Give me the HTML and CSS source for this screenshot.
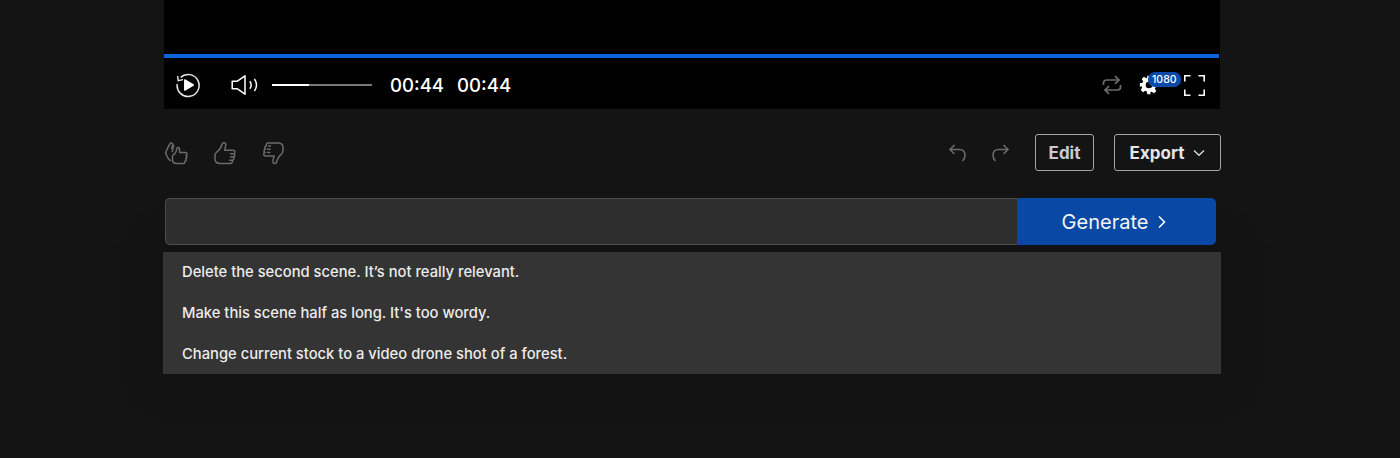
FILE: index.html
```html
<!doctype html>
<html>

<head>
    <meta charset="UTF-8">
    <title>Video editor</title>
    <link rel="stylesheet" href="styles.css">
</head>

<body>
    <div class="page">
        <div class="video">
            <div class="progress"></div>
            <div class="controls">
                <svg class="replay" width="26" height="26" viewBox="0 0 26 26" fill="none" stroke="#e8e8e8" stroke-width="1.5">
                    <path d="M5.600 5.400A11 11 0 1 1 2.200 12" />
                    <path d="M2.600 4 3.200 8.600 8 7.600" stroke-width="1.400" />
                    <path d="M9.800 8 18.200 13 9.800 18z" fill="#fff" stroke="#fff" stroke-linejoin="round" />
                </svg>
                <svg class="volume" width="28" height="22" viewBox="0 0 28 22" fill="none" stroke="#fff" stroke-width="1.5">
                    <path d="M1.200 7.200h5.200L14 1.800v18.400l-7.600-5.400H1.200z" stroke-linejoin="round" />
                    <path d="M18.800 7.200c1.600 2.200 1.600 5.400 0 7.600" />
                    <path d="M23.400 4.800c2.600 3.800 2.600 8.600 0 12.400" />
                </svg>
                <div class="volume-bar">
                    <div class="volume-level"></div>
                </div>
                <span class="time first">00:44</span>
                <span class="time">00:44</span>
                <div class="controls-right">
                    <svg class="loop" width="20" height="20" viewBox="0 0 20 20" fill="none" stroke="#6e6e6e" stroke-width="1.700">
                        <path d="M1.500 10V8a3 3 0 0 1 3-3h12" />
                        <path d="M13 1.200 17 5l-4 3.800" />
                        <path d="M18.500 10v2a3 3 0 0 1-3 3h-12" />
                        <path d="M7 11.200 3 15l4 3.800" />
                    </svg>
                    <div class="settings">
                        <svg width="20" height="20" viewBox="0 0 24 24" fill="#fff">
                            <path fill-rule="evenodd" d="M10 1h4l.6 3.200 1.900.8 2.700-1.800 2.800 2.800-1.800 2.700.8 1.900L23 10v4l-3.200.6-.8 1.900 1.800 2.700-2.800 2.800-2.700-1.800-1.900.8L14 23h-4l-.6-3.200-1.900-.8-2.700 1.800L2 18l1.800-2.700-.8-1.900L1 14v-4l3.200-.6.8-1.900L3.200 4.800 6 2l2.700 1.800 1-.5zM12 8a4 4 0 1 0 0 8 4 4 0 0 0 0-8z" />
                        </svg>
                        <span class="badge">1080</span>
                    </div>
                    <svg class="fullscreen" width="21" height="21" viewBox="0 0 21 21" fill="none" stroke="#fff" stroke-width="1.600">
                        <path d="M.8 6.500V.8h5.700M14.500.8h5.700v5.700M20.200 14.500v5.700h-5.700M6.500 20.200H.8v-5.700" />
                    </svg>
                </div>
            </div>
        </div>

        <div class="actions">
            <div class="ratings">
                <svg width="26" height="26" viewBox="0 0 26 26" fill="none" stroke="#6b6b6b" stroke-width="1.500" stroke-linejoin="round" stroke-linecap="round">
                    <path d="M6.500 20.500c-1.500-.5-2-1.500-2.800-3L2.200 14.500c-.8-1.500-.6-2.700.3-4.200l3.300-6.500c.8-1.500 3.200-.9 2.900 1L7.700 8.500" />
                    <path d="M11 13.500c1-1.500 1.600-3 1.800-5 .1-1.400 2.500-1.500 2.700.3l.1 3.700h5.900c2 0 2 2.800.3 3 1.500.5 1.300 2.700-.2 2.900 1 .7.700 2.500-.6 2.700.3 1-.3 2.400-1.600 2.400h-6.400c-2.700 0-4.500-1.300-4.500-3.500V16c0-1 1.600-1.500 2.500-2.500z" />
                    <path d="M9.800 5.500c-.7 1.500-1.200 3.500-1.500 6" />
                </svg>
                <svg width="26" height="26" viewBox="0 0 26 26" fill="none" stroke="#6b6b6b" stroke-width="1.500" stroke-linejoin="round" stroke-linecap="round">
                    <path d="M2 15c0-1.300.7-2.200 1.800-3 2.500-1.800 4.500-5 5.500-8.200.5-1.600 3.500-1.500 3.500.8 0 1.700-.6 3.700-1.200 5.700h8.300c2.700 0 2.700 3.200.7 3.500 1.700.6 1.400 3-.3 3.300 1.100.9.700 2.900-.8 3.100.4 1.300-.4 3.300-2.200 3.300H7.500C4 23.500 2 21.800 2 19z" />
                    <path d="M17.500 13.800h2.300M17.500 17.100h2.500M16.500 20.300h2" />
                </svg>
                <svg class="thumb-down" width="26" height="26" viewBox="0 0 26 26" fill="none" stroke="#6b6b6b" stroke-width="1.500" stroke-linejoin="round" stroke-linecap="round">
                    <path d="M24 10.500c0 1.700-.7 2.800-1.800 3.800-2.500 1.800-3.900 5-4.900 8.200-.5 1.600-3.400 1.500-3.400-.8 0-1.700.6-3.700 1.200-5.700H6.800c-2.700 0-2.700-3.200-.7-3.500-1.700-.6-1.400-3 .3-3.300-1.100-.9-.7-2.900.8-3.100-.4-1.300.4-3.100 2.200-3.100h9.600c3 0 5 1.700 5 4.500z" />
                    <path d="M8.500 12.500h2.300M8.500 9.200H11M9.500 6h2" />
                </svg>
            </div>
            <div class="history">
                <svg width="20" height="20" viewBox="0 0 20 20" fill="none" stroke="#6b6b6b" stroke-width="1.600">
                    <path d="M6.500 2 2 6.500l4.500 4.500" />
                    <path d="M2 6.500h9.500c3.500 0 5.500 2.500 5.500 5.500 0 2.500-1 4.500-2.500 6" />
                </svg>
                <svg width="20" height="20" viewBox="0 0 20 20" fill="none" stroke="#6b6b6b" stroke-width="1.600">
                    <path d="M13.500 2 18 6.500 13.500 11" />
                    <path d="M18 6.500H8.500C5 6.500 3 9 3 12c0 2.500 1 4.500 2.500 6" />
                </svg>
            </div>
            <button class="btn edit">Edit</button>
            <button class="btn export">Export
                <svg width="12" height="8" viewBox="0 0 12 8" fill="none" stroke="#ddd" stroke-width="1.300">
                    <path d="M1 1.500 6 6.300l5-4.800" />
                </svg>
            </button>
        </div>

        <div class="prompt">
            <input class="prompt-input" type="text">
            <button class="generate">Generate
                <svg width="10" height="14" viewBox="0 0 10 14" fill="none" stroke="#fff" stroke-width="1.500">
                    <path d="M2 1.500 7.500 7 2 12.500" />
                </svg>
            </button>
        </div>

        <ul class="suggestions">
            <li>Delete the second scene. It’s not really relevant.</li>
            <li>Make this scene half as long. It's too wordy.</li>
            <li>Change current stock to a video drone shot of a forest.</li>
        </ul>
    </div>
</body>

</html>
```

FILE: styles.css
```css
* {
    margin: 0;
    padding: 0;
    box-sizing: border-box;
}

html,
body {
    width: 100%;
    height: 100%;
    overflow: hidden;
}

body {
    background-color: #141414;
    font-family: Inter, "Liberation Sans", sans-serif;
}

.page {
    width: 1058px;
    margin-left: 163px;
}

.video {
    width: 1056px;
    height: 109px;
    margin-left: 1px;
    padding-top: 54px;
    background-color: #000;
}

.progress {
    width: 1055px;
    height: 4px;
    background-color: #0b63dc;
}

.controls {
    display: flex;
    align-items: center;
    height: 51px;
    padding: 3px 15px 0 11px;
    color: #fff;
}

.replay {
    margin-top: -1px;
}

.volume {
    margin-left: 30px;
}

.volume-bar {
    width: 100px;
    height: 2px;
    margin-left: 13px;
    background-color: #777;
}

.volume-level {
    width: 37px;
    height: 100%;
    background-color: #fff;
}

.time {
    margin-left: 13px;
    font-size: 18.6px;
    font-weight: 500;
}

.time.first {
    margin-left: 18px;
}

.controls-right {
    display: flex;
    align-items: center;
    margin-left: auto;
}

.settings {
    position: relative;
    display: flex;
    margin-left: 17px;
    margin-right: 25px;
}

.badge {
    position: absolute;
    top: -3px;
    left: 9px;
    padding: 0 4px;
    border-radius: 7px;
    background-color: #0b4aa8;
    color: #fff;
    font-size: 10.5px;
    font-weight: 500;
    line-height: 15px;
}

.actions {
    display: flex;
    align-items: center;
    height: 37px;
    margin-top: 25px;
}

.ratings {
    display: flex;
    gap: 23px;
    margin-left: 1px;
    margin-right: auto;
}

.thumb-down {
    margin-left: -3px;
}

.history {
    display: flex;
    gap: 22px;
    margin-right: 25px;
}

.btn {
    height: 37px;
    border: 1px solid #a5a5a5;
    border-radius: 3px;
    background: transparent;
    color: #c8ccd2;
    font-family: inherit;
    font-size: 17px;
    font-weight: 700;
}

.edit {
    width: 59px;
    margin-right: 20px;
}

.export {
    display: flex;
    align-items: center;
    justify-content: center;
    gap: 9px;
    width: 107px;
    color: #e4e6ea;
}

.prompt {
    display: flex;
    width: 1051px;
    height: 47px;
    margin-top: 27px;
    margin-left: 2px;
}

.prompt-input {
    flex: 1;
    border: 1px solid #4d4d4d;
    border-right-color: #3f3f3f;
    border-radius: 5px 0 0 5px;
    background-color: #2e2e2e;
}

.generate {
    display: flex;
    align-items: center;
    justify-content: center;
    gap: 9px;
    width: 198px;
    padding-right: 5px;
    border: 0;
    border-radius: 0 5px 5px 0;
    background-color: #0a48a5;
    color: #f4f4f4;
    font-family: inherit;
    font-size: 20px;
    font-weight: 400;
}

.suggestions {
    height: 122px;
    margin-top: 7px;
    padding-left: 19px;
    list-style: none;
    overflow: hidden;
    background-color: #343434;
    box-shadow: 0 0 28px 8px #121212;
}

.suggestions li {
    height: 41px;
    color: #ececec;
    font-size: 14.75px;
    font-weight: 500;
    line-height: 40px;
}
```
